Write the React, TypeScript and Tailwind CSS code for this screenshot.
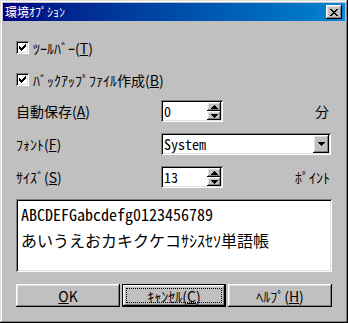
import React from "react";

const raised =
  "shadow-[inset_-1px_-1px_0_#000,inset_1px_1px_0_#fff,inset_-2px_-2px_0_#808080,inset_2px_2px_0_#dfdfdf]";
const sunken =
  "shadow-[inset_1px_1px_0_#808080,inset_-1px_-1px_0_#fff,inset_2px_2px_0_#000,inset_-2px_-2px_0_#dfdfdf]";

function Check() {
  return (
    <div className={`flex h-[13px] w-[13px] items-center justify-center bg-white ${sunken}`}>
      <svg width="7" height="7" viewBox="0 0 7 7" shapeRendering="crispEdges">
        <path d="M6 0h1v3h-1v1h-1v1h-1v1h-1v1h-1v-1h-1v-1h-1v-3h1v1h1v1h1v-1h1v-1h1z" fill="#000" />
      </svg>
    </div>
  );
}

function Arrow({ up }: { up?: boolean }) {
  return (
    <svg width="7" height="4" viewBox="0 0 7 4" shapeRendering="crispEdges">
      <path d={up ? "M3 0h1v1h1v1h1v1h1v1h-7v-1h1v-1h1v-1h1z" : "M0 0h7v1h-1v1h-1v1h-1v1h-1v-1h-1v-1h-1v-1h-1z"} fill="#000" />
    </svg>
  );
}

function Spin({ value }: { value: string }) {
  return (
    <div className={`flex h-[22px] w-[62px] bg-white p-[2px] ${sunken}`}>
      <span className="flex-1 pl-[1px] font-['Noto_Sans_Mono_CJK_JP','Liberation_Mono',monospace] text-[14px] leading-[18px]">
        {value}
      </span>
      <div className="flex w-[14px] flex-col">
        <div className={`flex h-[9px] items-center justify-center bg-[#c0c0c0] ${raised}`}>
          <Arrow up />
        </div>
        <div className={`flex h-[9px] items-center justify-center bg-[#c0c0c0] ${raised}`}>
          <Arrow />
        </div>
      </div>
    </div>
  );
}

function Btn({ children, def }: { children: React.ReactNode; def?: boolean }) {
  if (def) {
    return (
      <div className="h-[23px] w-[104px] border border-black">
        <div className={`relative flex h-full items-center justify-center bg-[#c0c0c0] ${raised}`}>
          <span className="absolute inset-[3px] border border-dotted border-black" />
          {children}
        </div>
      </div>
    );
  }
  return (
    <div className={`flex h-[23px] w-[104px] items-center justify-center bg-[#c0c0c0] ${raised}`}>
      {children}
    </div>
  );
}

function CloseX() {
  const px = [
    [0, 0], [1, 0], [6, 0], [7, 0],
    [1, 1], [2, 1], [5, 1], [6, 1],
    [2, 2], [3, 2], [4, 2], [5, 2],
    [3, 3], [4, 3],
    [2, 4], [3, 4], [4, 4], [5, 4],
    [1, 5], [2, 5], [5, 5], [6, 5],
    [0, 6], [1, 6], [6, 6], [7, 6],
  ];
  return (
    <svg width="8" height="7" viewBox="0 0 8 7" shapeRendering="crispEdges">
      {px.map(([x, y]) => (
        <rect key={`${x}-${y}`} x={x} y={y} width="1" height="1" fill="#000" />
      ))}
    </svg>
  );
}

export default function App() {
  return (
    <div
      className={`flex h-[323px] w-[348px] flex-col bg-[#c0c0c0] p-[3px] font-['Noto_Sans_CJK_JP',sans-serif] text-[14px] text-black ${"shadow-[inset_-1px_-1px_0_#000,inset_1px_1px_0_#dfdfdf,inset_-2px_-2px_0_#808080,inset_2px_2px_0_#fff]"}`}
    >
      {/* title bar */}
      <div className="flex h-[18px] items-center justify-between bg-linear-to-r from-[#000080] to-[#1084d0] pl-[2px] pr-[3px]">
        <span className="text-[12px] leading-none text-white">環境ｵﾌﾟｼｮﾝ</span>
        <div className={`flex h-[14px] w-[16px] items-center justify-center bg-[#c0c0c0] ${raised}`}>
          <CloseX />
        </div>
      </div>

      <div className="flex flex-col px-[13px] leading-none">
        <div className="mt-[20px] flex h-[13px] items-center gap-[4px]">
          <Check />
          <span>
            ﾂｰﾙﾊﾞｰ(<u>T</u>)
          </span>
        </div>
        <div className="mt-[19px] flex h-[13px] items-center gap-[4px]">
          <Check />
          <span>
            ﾊﾞｯｸｱｯﾌﾟﾌｧｲﾙ作成(<u>B</u>)
          </span>
        </div>

        <div className="mt-[14px] flex h-[22px] items-center">
          <span className="w-[145px]">
            自動保存(<u>A</u>)
          </span>
          <Spin value="0" />
          <span className="ml-[92px]">分</span>
        </div>

        <div className="mt-[11px] flex h-[22px] items-center">
          <span className="w-[145px]">
            ﾌｫﾝﾄ(<u>F</u>)
          </span>
          <div className={`flex h-[22px] w-[170px] bg-white p-[2px] ${sunken}`}>
            <span className="flex-1 pl-[1px] font-['Noto_Sans_Mono_CJK_JP','Liberation_Mono',monospace] text-[14px] leading-[18px]">
              System
            </span>
            <div className={`flex h-[18px] w-[16px] items-center justify-center bg-[#c0c0c0] ${raised}`}>
              <Arrow />
            </div>
          </div>
        </div>

        <div className="mt-[11px] flex h-[22px] items-center">
          <span className="w-[145px]">
            ｻｲｽﾞ(<u>S</u>)
          </span>
          <Spin value="13" />
          <span className="ml-[72px]">ﾎﾟｲﾝﾄ</span>
        </div>

        <div
          className={`mt-[11px] h-[73px] bg-white pl-[5px] pt-[2px] font-['Noto_Sans_Mono_CJK_JP','Noto_Sans_CJK_JP',monospace] text-[16px] leading-[26px] ${sunken}`}
        >
          <div>ABCDEFGabcdefg0123456789</div>
          <div>あいうえおカキクケコｻｼｽｾｿ単語帳</div>
        </div>

        <div className="mt-[12px] flex gap-[2px]">
          <Btn>
            <span>
              <u>O</u>K
            </span>
          </Btn>
          <Btn def>
            <span>
              ｷｬﾝｾﾙ(<u>C</u>)
            </span>
          </Btn>
          <Btn>
            <span>
              ﾍﾙﾌﾟ(<u>H</u>)
            </span>
          </Btn>
        </div>
      </div>
    </div>
  );
}
